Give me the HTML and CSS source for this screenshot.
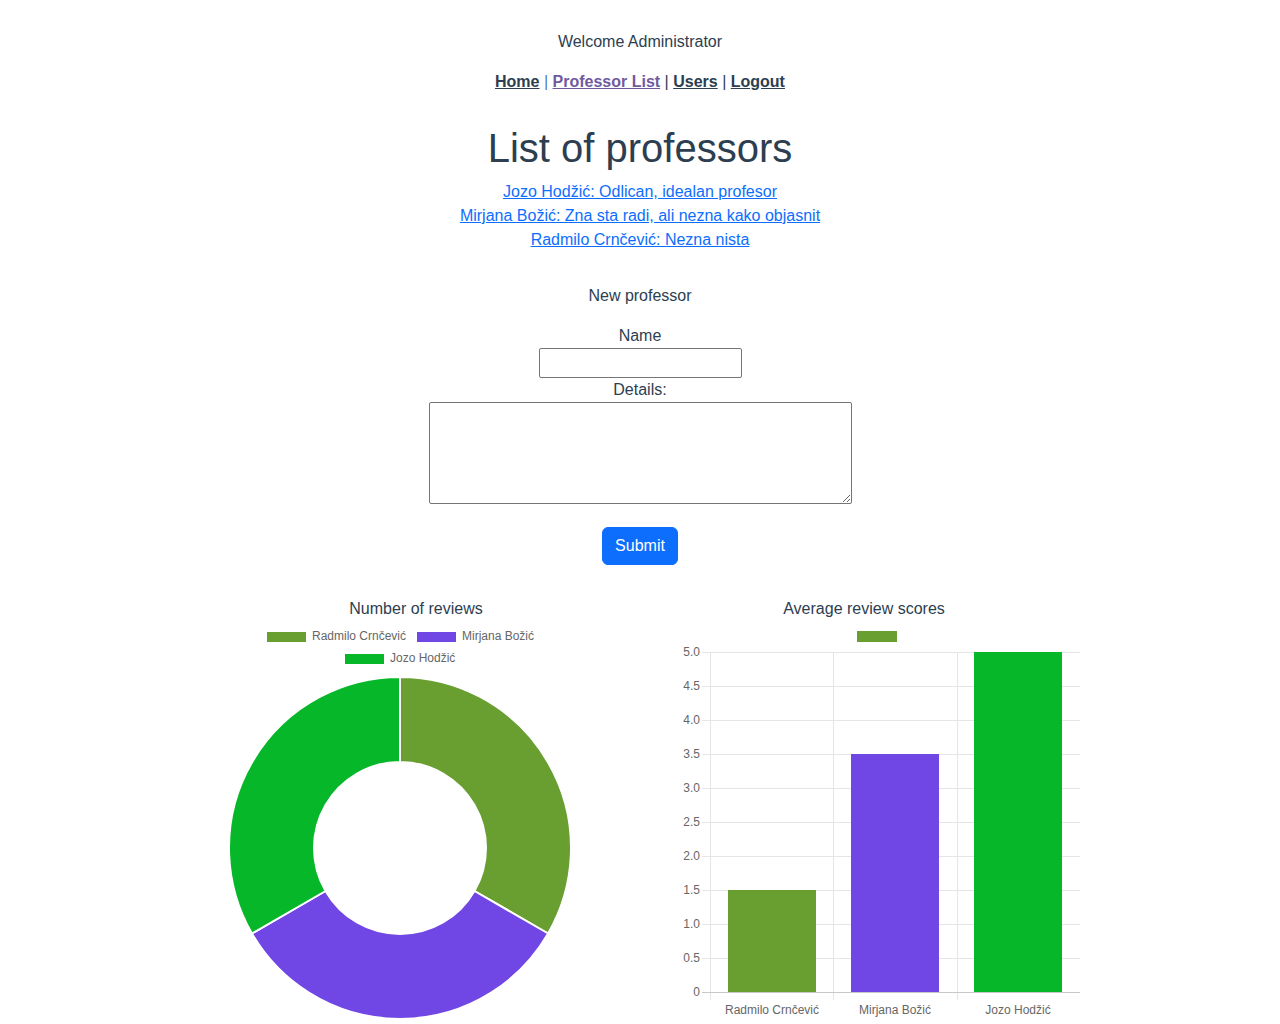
FILE: index.html
```html
<!DOCTYPE html>
<html lang="en">
<head>
<meta charset="utf-8">
<title>List of professors</title>
<link rel="stylesheet" href="styles.css">
</head>
<body>
<header class="top">
  <p class="welcome">Welcome Administrator</p>
  <nav class="nav">
    <a class="nav-link" href="#">Home</a> <span class="sep sep-blue">|</span>
    <a class="nav-link visited" href="#">Professor List</a> <span class="sep">|</span>
    <a class="nav-link" href="#">Users</a> <span class="sep">|</span>
    <a class="nav-link" href="#">Logout</a>
  </nav>
</header>
<main class="main">
  <h1 class="title">List of professors</h1>
  <ul class="prof-list">
    <li><a href="#">Jozo Hodžić: Odlican, idealan profesor</a></li>
    <li><a href="#">Mirjana Božić: Zna sta radi, ali nezna kako objasnit</a></li>
    <li><a href="#">Radmilo Crnčević: Nezna nista</a></li>
  </ul>
  <form class="form">
    <p class="form-title">New professor</p>
    <label class="lbl" for="name">Name</label>
    <input class="inp" id="name" type="text">
    <label class="lbl" for="details">Details:</label>
    <textarea class="txt" id="details"></textarea>
    <button class="btn" type="button">Submit</button>
  </form>
  <section class="charts">
    <div class="chart chart-left">
      <h5 class="chart-title">Number of reviews</h5>
      <svg class="svg-left" width="400" height="404" viewBox="0 0 400 404">
        <g font-family="Liberation Sans, Arial, sans-serif" font-size="12" fill="#666">
          <rect x="67" y="12" width="39" height="10" fill="#699e31"/>
          <text x="112" y="20">Radmilo Crnčević</text>
          <rect x="217" y="12" width="39" height="10" fill="#7046e4"/>
          <text x="262" y="20">Mirjana Božić</text>
          <rect x="145" y="34" width="39" height="10" fill="#06b72a"/>
          <text x="190" y="42">Jozo Hodžić</text>
        </g>
        <g stroke="#fff" stroke-width="2" stroke-linejoin="round">
          <path fill="#699e31" d="M200 57 A171 171 0 0 1 348.09 313.5 L274.48 271 A86 86 0 0 0 200 142 Z"/>
          <path fill="#7046e4" d="M348.09 313.5 A171 171 0 0 1 51.91 313.5 L125.52 271 A86 86 0 0 0 274.48 271 Z"/>
          <path fill="#06b72a" d="M51.91 313.5 A171 171 0 0 1 200 57 L200 142 A86 86 0 0 0 125.52 271 Z"/>
        </g>
      </svg>
    </div>
    <div class="chart chart-right">
      <h5 class="chart-title">Average review scores</h5>
      <svg class="svg-right" width="440" height="404" viewBox="0 0 440 404">
        <rect x="201" y="11" width="40" height="11" fill="#699e31"/>
        <g stroke="#e5e5e5" stroke-width="1">
          <line x1="46" y1="32.5" x2="424" y2="32.5"/>
          <line x1="46" y1="66.5" x2="424" y2="66.5"/>
          <line x1="46" y1="100.5" x2="424" y2="100.5"/>
          <line x1="46" y1="134.5" x2="424" y2="134.5"/>
          <line x1="46" y1="168.5" x2="424" y2="168.5"/>
          <line x1="46" y1="202.5" x2="424" y2="202.5"/>
          <line x1="46" y1="236.5" x2="424" y2="236.5"/>
          <line x1="46" y1="270.5" x2="424" y2="270.5"/>
          <line x1="46" y1="304.5" x2="424" y2="304.5"/>
          <line x1="46" y1="338.5" x2="424" y2="338.5"/>
          <line x1="54.5" y1="32" x2="54.5" y2="380"/>
          <line x1="177.5" y1="32" x2="177.5" y2="380"/>
          <line x1="301.5" y1="32" x2="301.5" y2="380"/>
        </g>
        <line x1="46" y1="372.5" x2="424" y2="372.5" stroke="#c8c8c8" stroke-width="1"/>
        <rect x="72" y="270" width="88" height="102" fill="#699e31"/>
        <rect x="195" y="134" width="88" height="238" fill="#7046e4"/>
        <rect x="318" y="32" width="88" height="340" fill="#06b72a"/>
        <g font-family="Liberation Sans, Arial, sans-serif" font-size="12" fill="#666" text-anchor="end">
          <text x="44" y="36">5.0</text>
          <text x="44" y="70">4.5</text>
          <text x="44" y="104">4.0</text>
          <text x="44" y="138">3.5</text>
          <text x="44" y="172">3.0</text>
          <text x="44" y="206">2.5</text>
          <text x="44" y="240">2.0</text>
          <text x="44" y="274">1.5</text>
          <text x="44" y="308">1.0</text>
          <text x="44" y="342">0.5</text>
          <text x="44" y="376">0</text>
        </g>
        <g font-family="Liberation Sans, Arial, sans-serif" font-size="12" fill="#666" text-anchor="middle">
          <text x="116" y="394">Radmilo Crnčević</text>
          <text x="239" y="394">Mirjana Božić</text>
          <text x="362" y="394">Jozo Hodžić</text>
        </g>
      </svg>
    </div>
  </section>
</main>
</body>
</html>
```

FILE: styles.css
```css
* { box-sizing: border-box; }
html, body { margin: 0; padding: 0; background: #fff; }
body {
  font-family: "Liberation Sans", Arial, sans-serif;
  font-size: 16px;
  line-height: 24px;
  color: #2c3e50;
  text-align: center;
}
.top { padding-top: 30px; }
.welcome { margin: 0 0 16px; }
.nav { font-weight: bold; }
.nav-link { color: #2c3e50; text-decoration: underline; }
.nav-link.visited { color: #6f5aa0; }
.sep { font-weight: normal; color: #2c3e50; }
.sep-blue { color: #4f7dbb; }
.main { display: flex; flex-direction: column; align-items: center; }
.title {
  margin: 30px 0 8px;
  font-size: 40px;
  line-height: 48px;
  font-weight: 500;
  color: #2c3e50;
}
.prof-list { list-style: none; margin: 0; padding: 0; }
.prof-list a { color: #0d6efd; text-decoration: underline; }
.form { display: flex; flex-direction: column; align-items: center; margin-top: 32px; }
.form-title { margin: 0 0 16px; }
.lbl { display: block; }
.inp {
  width: 203px;
  height: 30px;
  border: 1px solid #767676;
  border-radius: 2px;
  font: inherit;
  padding: 1px 2px;
}
.txt {
  width: 423px;
  height: 102px;
  border: 1px solid #767676;
  border-radius: 2px;
  font: inherit;
  resize: vertical;
}
.btn {
  margin-top: 23px;
  width: 76px;
  height: 38px;
  background: #0d6efd;
  color: #fff;
  border: 1px solid #0d6efd;
  border-radius: 6px;
  font: inherit;
  font-size: 16px;
  padding: 6px 12px;
}
.charts {
  display: flex;
  width: 896px;
  margin-top: 31px;
}
.chart { width: 448px; display: flex; flex-direction: column; align-items: flex-start; }
.chart-title {
  width: 100%;
  margin: 0;
  padding-top: 1px;
  font-size: 16px;
  font-weight: normal;
  line-height: 24px;
}
.svg-left { display: block; margin-left: 8px; margin-top: -1px; }
.svg-right { display: block; margin-left: 16px; margin-top: -1px; }
```
